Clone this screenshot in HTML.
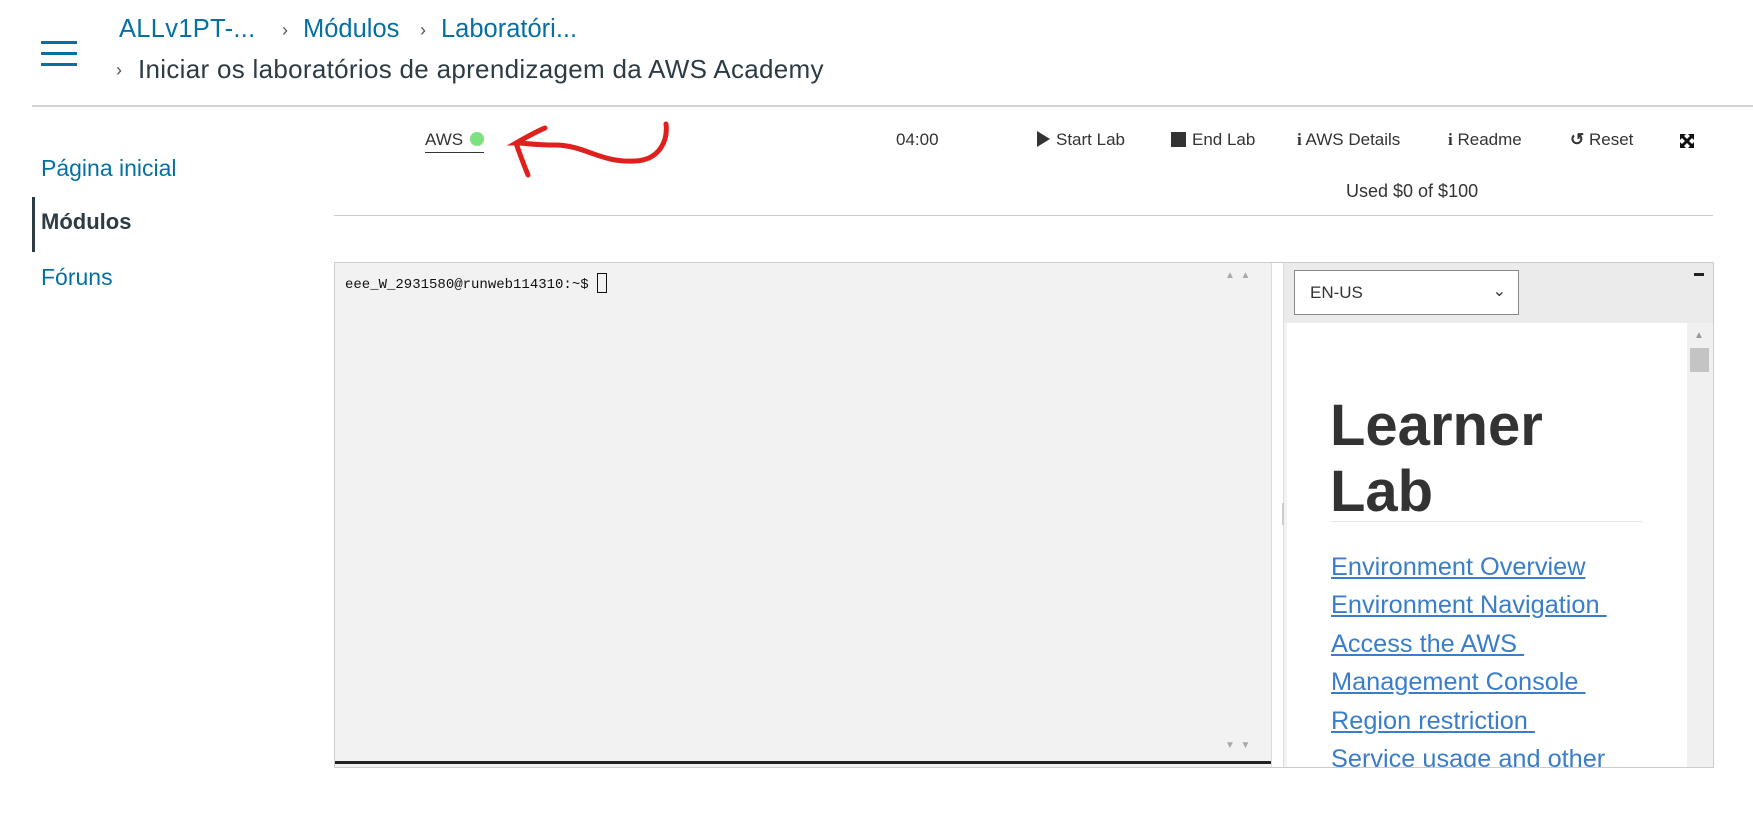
<!DOCTYPE html>
<html><head><meta charset="utf-8"><style>
*{margin:0;padding:0;box-sizing:border-box}
body{width:1753px;height:814px;background:#fff;position:relative;overflow:hidden;font-family:"Liberation Sans",sans-serif;color:#2d3b45}
.a{position:absolute;white-space:nowrap}
.blue{color:#0770a3}
.tb{font-size:17px;color:#333;top:130px}
</style></head><body>
<div class="a" style="left:41px;top:41px;width:36px;height:3px;background:#0770a3"></div>
<div class="a" style="left:41px;top:52px;width:36px;height:3px;background:#0770a3"></div>
<div class="a" style="left:41px;top:63px;width:36px;height:3px;background:#0770a3"></div>
<div class="a blue" style="left:119px;top:15px;font-size:25.5px;letter-spacing:0.3px">ALLv1PT-...</div>
<div class="a" style="left:282px;top:20px;font-size:18px;color:#555">›</div>
<div class="a blue" style="left:303px;top:15px;font-size:25.5px">Módulos</div>
<div class="a" style="left:420px;top:20px;font-size:18px;color:#555">›</div>
<div class="a blue" style="left:441px;top:15px;font-size:25.5px">Laboratóri...</div>
<div class="a" style="left:116px;top:60px;font-size:18px;color:#555">›</div>
<div class="a" style="left:138px;top:54px;font-size:26px;color:#2d3b45;letter-spacing:0.3px">Iniciar os laboratórios de aprendizagem da AWS Academy</div>
<div class="a" style="left:32px;top:105px;width:1721px;height:2px;background:#d4d4d4"></div>
<div class="a blue" style="left:41px;top:155px;font-size:23px">Página inicial</div>
<div class="a" style="left:32px;top:197px;width:3px;height:55px;background:#2d3b45"></div>
<div class="a" style="left:41px;top:209px;font-size:22px;font-weight:bold;color:#2d3b45">Módulos</div>
<div class="a blue" style="left:41px;top:264px;font-size:23px">Fóruns</div>
<div class="a" style="left:425px;top:130px;font-size:17px;color:#333;border-bottom:1px solid #333;padding-bottom:2px">AWS <span style="display:inline-block;width:14px;height:14px;border-radius:50%;background:#7ee07e;vertical-align:-1px;margin-left:2px"></span></div>
<svg class="a" style="left:500px;top:115px" width="180" height="80" viewBox="500 115 180 80"><path d="M666 124 C668 140 660 160 635 161 C600 163 585 145 555 145 C535 145 525 143 516 143 C530 135 540 130 545 128 M516 143 C520 155 524 165 528 175" fill="none" stroke="#e0201c" stroke-width="5" stroke-linecap="round"/></svg>
<div class="a tb" style="left:896px">04:00</div>
<div class="a tb" style="left:1037px"><span style="display:inline-block;width:0;height:0;border-left:13px solid #333;border-top:8px solid transparent;border-bottom:8px solid transparent;vertical-align:-2px;margin-right:6px"></span>Start Lab</div>
<div class="a tb" style="left:1171px"><span style="display:inline-block;width:15px;height:15px;background:#333;vertical-align:-2px;margin-right:6px"></span>End Lab</div>
<div class="a tb" style="left:1297px"><b style="font-family:'Liberation Serif',serif">i</b> AWS Details</div>
<div class="a tb" style="left:1448px"><b style="font-family:'Liberation Serif',serif">i</b> Readme</div>
<div class="a tb" style="left:1570px"><b>↺</b> Reset</div>
<svg class="a" style="left:1679px;top:133px" width="16" height="16" viewBox="0 0 16 16"><path d="M2 2 L14 14 M14 2 L2 14" stroke="#111" stroke-width="3"/><path d="M1 1 H7 L1 7Z M15 1 H9 L15 7Z M1 15 H7 L1 9Z M15 15 H9 L15 9Z" fill="#111"/></svg>
<div class="a" style="left:1346px;top:181px;font-size:18px;color:#333">Used $0 of $100</div>
<div class="a" style="left:334px;top:215px;width:1379px;height:1px;background:#ccc"></div>
<div class="a" style="left:334px;top:262px;width:1380px;height:506px;border:1px solid #ccc;background:#f2f2f2"></div>
<div class="a" style="left:345px;top:273px;font-family:'Liberation Mono',monospace;font-size:14px;color:#111">eee_W_2931580@runweb114310:~$ <span style="display:inline-block;width:10px;height:20px;border:1.5px solid #111;vertical-align:-5px"></span></div>
<div class="a" style="left:1225px;top:270px;font-size:10px;color:#aaa">▲ &nbsp;▲</div>
<div class="a" style="left:1225px;top:740px;font-size:10px;color:#aaa">▼ &nbsp;▼</div>
<div class="a" style="left:335px;top:761px;width:936px;height:3px;background:#222"></div>
<div class="a" style="left:1271px;top:263px;width:13px;height:504px;background:#fff;border-left:1px solid #ddd;border-right:1px solid #ddd"></div>
<div class="a" style="left:1282px;top:503px;width:2px;height:22px;background:#ccc"></div>
<div class="a" style="left:1284px;top:263px;width:429px;height:60px;background:#ebebeb"></div>
<div class="a" style="left:1294px;top:270px;width:225px;height:45px;border:1px solid #888;background:#fff;font-size:17px;color:#333;padding:12px 0 0 15px">EN-US<span style="position:absolute;right:12px;top:10px;font-size:16px">⌄</span></div>
<div class="a" style="left:1694px;top:273px;width:10px;height:3px;background:#222"></div>
<div class="a" style="left:1287px;top:323px;width:400px;height:444px;background:#fff"></div>
<div class="a" style="left:1688px;top:323px;width:24px;height:444px;background:#f0f0f0"></div>
<div class="a" style="left:1694px;top:330px;font-size:10px;color:#999">▲</div>
<div class="a" style="left:1690px;top:348px;width:19px;height:24px;background:#c4c4c4"></div>
<div class="a" style="left:1330px;top:393px;font-size:58px;font-weight:bold;color:#333;line-height:66px">Learner<br>Lab</div>
<div class="a" style="left:1331px;top:521px;width:312px;height:1px;background:#e6e6e6"></div>
<div class="a" style="left:1331px;top:548px;font-size:25.3px;line-height:38.4px;color:#3a7dc9;text-decoration:underline;height:219px;overflow:hidden">Environment Overview<br>Environment Navigation&nbsp;<br>Access the AWS&nbsp;<br>Management Console&nbsp;<br>Region restriction&nbsp;<br>Service usage and other</div>
</body></html>
